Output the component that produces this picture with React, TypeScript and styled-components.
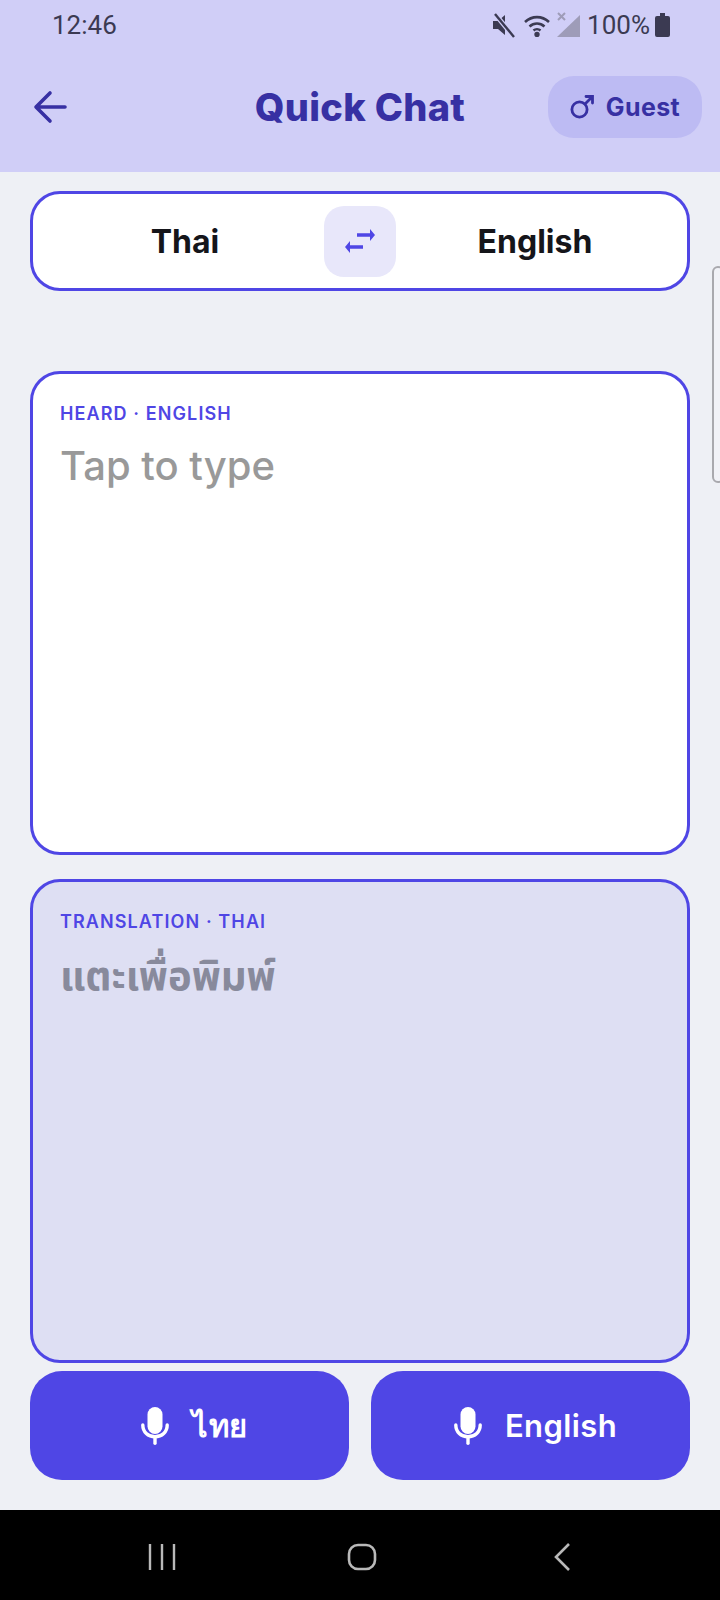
import styled, { createGlobalStyle } from "styled-components";

const Global = createGlobalStyle`
  html, body { margin: 0; padding: 0; }
  body { font-family: Inter, "Noto Sans", sans-serif; background: #eef0f5; }
`;

const Page = styled.div`
  position: relative;
  width: 720px;
  height: 1600px;
  display: flex;
  flex-direction: column;
  overflow: hidden;
  background: #eef0f5;
`;

const Header = styled.header`
  height: 172px;
  background: #d0cef7;
  display: flex;
  flex-direction: column;
`;

const StatusBar = styled.div`
  height: 50px;
  padding: 0 50px 0 52px;
  display: flex;
  align-items: center;
  justify-content: space-between;
  color: #3b3a52;
  font-family: Roboto, sans-serif;
  font-size: 26px;
`;

const StatusIcons = styled.div`
  display: flex;
  align-items: center;
  gap: 6px;
`;

const AppBar = styled.div`
  flex: 1;
  padding: 0 18px 8px;
  display: grid;
  grid-template-columns: 1fr auto 1fr;
  align-items: center;
`;

const BackButton = styled.div`
  display: flex;
  margin-left: 15px;
  color: #3730a3;
`;

const Title = styled.h1`
  margin: 0;
  font-size: 38px;
  font-weight: 800;
  letter-spacing: 0.3px;
  color: #3730a3;
`;

const GuestPill = styled.div`
  justify-self: end;
  width: 154px;
  height: 62px;
  border-radius: 26px;
  background: #bdbbf3;
  color: #3730a3;
  display: flex;
  align-items: center;
  justify-content: center;
  gap: 12px;
  font-size: 25px;
  font-weight: 700;
  letter-spacing: 0.4px;
`;

const Content = styled.main`
  flex: 1;
  padding: 19px 30px 30px;
  display: flex;
  flex-direction: column;
`;

const LangBar = styled.div`
  height: 100px;
  box-sizing: border-box;
  border: 3px solid #4f46e5;
  border-radius: 30px;
  background: #fff;
  display: grid;
  grid-template-columns: 1fr 72px 1fr;
  align-items: center;
  padding: 0 13px;
  margin-bottom: 80px;
`;

const LangName = styled.div`
  text-align: center;
  font-size: 32px;
  font-weight: 700;
  color: #15151a;
`;

const SwapButton = styled.div`
  height: 71px;
  border-radius: 20px;
  background: #e8e7fa;
  display: flex;
  align-items: center;
  justify-content: center;
`;

const Card = styled.section<{ $tinted?: boolean }>`
  flex: 1;
  box-sizing: border-box;
  border: 3px solid #4f46e5;
  border-radius: 30px;
  padding: 29px 27px;
  background: ${(p) => (p.$tinted ? "#dedff3" : "#fff")};
  & + & {
    margin-top: 24px;
  }
`;

const CardLabel = styled.div`
  font-size: 18px;
  line-height: 22px;
  font-weight: 600;
  letter-spacing: 1.1px;
  color: #4f46e5;
`;

const Placeholder = styled.div<{ $thai?: boolean }>`
  margin-top: ${(p) => (p.$thai ? 15 : 13)}px;
  font-family: Inter, "Noto Sans Thai", "Noto Sans", sans-serif;
  font-size: 40px;
  line-height: 56px;
  font-weight: ${(p) => (p.$thai ? 700 : 500)};
  color: ${(p) => (p.$thai ? "#888a9c" : "#999999")};
`;

const MicRow = styled.div`
  margin-top: 8px;
  display: flex;
  gap: 22px;
`;

const MicButton = styled.div`
  flex: 1;
  height: 109px;
  padding-left: 10px;
  border-radius: 32px;
  background: #4f46e5;
  color: #fff;
  display: flex;
  align-items: center;
  justify-content: center;
  gap: 23px;
  font-size: 31px;
  font-weight: 600;
  letter-spacing: 0.4px;
`;

const NavBar = styled.nav`
  height: 90px;
  box-sizing: border-box;
  background: #000;
  display: grid;
  grid-template-columns: repeat(3, 200px);
  padding: 4px 0 0 62px;
  align-items: center;
  justify-items: center;
`;

const EdgeHandle = styled.div`
  position: absolute;
  top: 266px;
  left: 712px;
  width: 12px;
  height: 217px;
  box-sizing: border-box;
  border: 2px solid #a9a9ae;
  border-radius: 7px;
  background: #f1f2f7;
`;

const MicIcon = () => (
  <svg width="28" height="38" viewBox="0 0 28 38" fill="none">
    <rect x="6.500" y="0" width="15" height="27" rx="7.500" fill="#fff" />
    <path d="M1.800 18c0 7 5.200 11.800 12.200 11.800S26.200 25 26.200 18" stroke="#fff" strokeWidth="3.400" strokeLinecap="round" />
    <path d="M14 30v6.300" stroke="#fff" strokeWidth="3.400" strokeLinecap="round" />
  </svg>
);

export default function App() {
  return (
    <Page>
      <Global />
      <Header>
        <StatusBar>
          <span>12:46</span>
          <StatusIcons>
            <svg width="24" height="28" viewBox="0 0 24 28">
              <path d="M1 10h5l7-6v20l-7-6H1z" fill="#3b3a52" />
              <path d="M3 3l19 23" stroke="#d0cef7" strokeWidth="5" />
              <path d="M3 3l19 23" stroke="#3b3a52" strokeWidth="2.4" />
            </svg>
            <svg width="28" height="24" viewBox="0 0 28 24" fill="none" stroke="#3b3a52" strokeWidth="2.6" style={{ marginLeft: 1 }}>
              <path d="M2 9c7-6.500 17-6.500 24 0" />
              <path d="M6.500 13.500c4.500-4 10.500-4 15 0" />
              <path d="M10.500 17.500c2-1.700 5-1.700 7 0" />
              <circle cx="14" cy="21.500" r="1.400" fill="#3b3a52" />
            </svg>
            <svg width="24" height="26" viewBox="0 0 24 26">
              <path d="M0 25L23 3v22z" fill="#9e9cb8" />
              <path d="M1 1l7 7M8 1L1 8" stroke="#9e9cb8" strokeWidth="2" />
            </svg>
            <span>100%</span>
            <svg width="15" height="24" viewBox="0 0 15 24" style={{ marginLeft: -1 }}>
              <path d="M5 0h5v3h3a2 2 0 0 1 2 2v17a2 2 0 0 1-2 2H2a2 2 0 0 1-2-2V5a2 2 0 0 1 2-2h3z" fill="#3b3a52" />
            </svg>
          </StatusIcons>
        </StatusBar>
        <AppBar>
          <BackButton>
            <svg width="34" height="36" viewBox="0 0 34 36" fill="none" stroke="currentColor" strokeWidth="3.600" strokeLinecap="round" strokeLinejoin="round">
              <path d="M32 18H4M17 4L3 18l14 14" />
            </svg>
          </BackButton>
          <Title>Quick Chat</Title>
          <GuestPill>
            <svg width="24" height="24" viewBox="0 0 24 24" fill="none" stroke="currentColor" strokeWidth="2.800" strokeLinecap="round">
              <circle cx="9.500" cy="14.500" r="7.600" />
              <path d="M15 9l7.500-7.500M16 1.500h6.500V8" />
            </svg>
            Guest
          </GuestPill>
        </AppBar>
      </Header>
      <Content>
        <LangBar>
          <LangName>Thai</LangName>
          <SwapButton>
            <svg width="30" height="26" viewBox="0 0 30 26" fill="#4f46e5">
              <path d="M12 5.200h13V1l5 6-5 6V8.800H12z" />
              <path d="M18 17.200H5V13l-5 6 5 6v-4.200h13z" />
            </svg>
          </SwapButton>
          <LangName>English</LangName>
        </LangBar>
        <Card>
          <CardLabel>HEARD · ENGLISH</CardLabel>
          <Placeholder>Tap to type</Placeholder>
        </Card>
        <Card $tinted>
          <CardLabel>TRANSLATION · THAI</CardLabel>
          <Placeholder $thai>แตะเพื่อพิมพ์</Placeholder>
        </Card>
        <MicRow>
          <MicButton>
            <MicIcon />
            ไทย
          </MicButton>
          <MicButton>
            <MicIcon />
            English
          </MicButton>
        </MicRow>
      </Content>
      <NavBar>
        <svg width="30" height="28" viewBox="0 0 30 28" stroke="#b9b9b9" strokeWidth="2.4">
          <path d="M3 1v26M15 1v26M27 1v26" />
        </svg>
        <svg width="30" height="28" viewBox="0 0 30 28" fill="none" stroke="#b9b9b9" strokeWidth="2.6">
          <rect x="2" y="2" width="26" height="24" rx="9" />
        </svg>
        <svg width="18" height="30" viewBox="0 0 18 30" fill="none" stroke="#b9b9b9" strokeWidth="2.6">
          <path d="M16 2L3 15l13 13" />
        </svg>
      </NavBar>
      <EdgeHandle />
    </Page>
  );
}
